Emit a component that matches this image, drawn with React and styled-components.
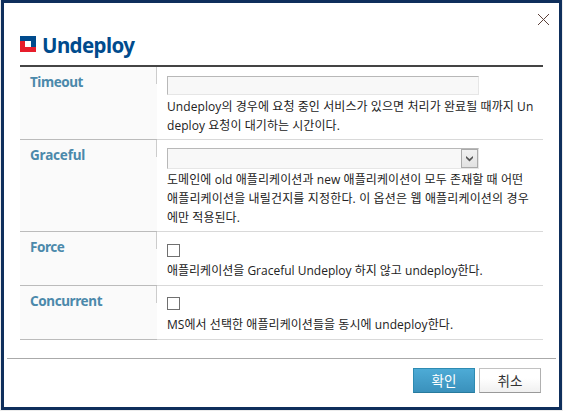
import React from "react";
import styled, { createGlobalStyle } from "styled-components";

const Global = createGlobalStyle`
  * { box-sizing: border-box; }
  body { margin: 0; background: #ececec; overflow: hidden; }
  body, button, input { font-family: "Open Sans", "Noto Sans CJK KR", sans-serif; }
`;

const Dialog = styled.section`
  width: 561px;
  height: 410px;
  margin-left: 1px;
  border: 3px solid #0f2f5c;
  background: #fff;
  display: flex;
  flex-direction: column;
`;

const Header = styled.header`
  height: 62px;
  padding-left: 16px;
  display: flex;
  align-items: flex-start;
`;

const Logo = styled.svg`
  width: 16px;
  height: 16px;
  margin-top: 33px;
  flex: none;
`;

const Title = styled.h1`
  margin: 27px 0 0 6px;
  font: 700 20.5px/30px "Noto Sans", sans-serif;
  letter-spacing: -0.6px;
  color: #004b8d;
`;

const CloseButton = styled.button`
  width: 13px;
  height: 13px;
  margin: 10px 9px 0 auto;
  padding: 0;
  border: 0;
  background: none;
  display: flex;
  svg { display: block; }
`;

const Table = styled.div`
  width: 523px;
  margin-left: 16px;
  border-top: 2px solid #444;
`;

const Row = styled.div`
  display: grid;
  grid-template-columns: 137px 386px;
  height: ${(p) => p.$height}px;
`;

const Label = styled.div`
  padding: 6px 0 0 10px;
  border-bottom: 1px solid #bbb;
  background: linear-gradient(#ccc, #ccc) right top / 1px 17px no-repeat #fafafa;
  color: #4b89ab;
  font: 700 13.5px/18px "Noto Sans", sans-serif;
  letter-spacing: ${(p) => p.$spacing}px;
`;

const Field = styled.div`
  padding: ${(p) => p.$top}px 0 0 10px;
  border-bottom: 1px solid #d9d9d9;
`;

const TextInput = styled.input`
  display: block;
  width: 312px;
  height: 19px;
  padding: 0 4px;
  border: 1px solid #e6e6e6;
  border-top-color: #b8b8b8;
  border-left-color: #b8b8b8;
  background: #f8f8f8;
`;

const Select = styled.div`
  display: flex;
  justify-content: flex-end;
  width: 312px;
  height: 21px;
  border: 1px solid #e6e6e6;
  border-top-color: #b8b8b8;
  border-left-color: #b8b8b8;
  background: #f8f8f8;
`;

const SelectArrow = styled.span`
  width: 17px;
  height: 19px;
  border: 1px solid #aaa;
  background: linear-gradient(#f1f1f1, #e2e2e2);
  display: flex;
  align-items: center;
  justify-content: center;
`;

const Checkbox = styled.input`
  appearance: none;
  display: block;
  width: 13px;
  height: 13px;
  margin: 0;
  border: 1px solid #707070;
  background: #fff;
`;

const Help = styled.p`
  margin: ${(p) => p.$gap}px 0 0;
  color: #222;
  font-size: 12px;
  line-height: 19px;
`;

const Line = styled.span`
  display: block;
  width: max-content;
  height: 19px;
  white-space: nowrap;
  letter-spacing: ${(p) => p.$spacing}px;
`;

const Footer = styled.footer`
  margin: 18px 3px 0;
  padding: 9px 15px 0 0;
  border-top: 1px solid #aaa;
  display: flex;
  justify-content: flex-end;
  gap: 4px;
`;

const Button = styled.button`
  width: 62px;
  height: 25px;
  padding: 0;
  font-size: 13.5px;
  line-height: 22px;
  color: ${(p) => (p.$primary ? "#fff" : "#333")};
  border: 1px solid;
  border-color: ${(p) => (p.$primary ? "#2d8bb2 #2d8bb2 #287a9d" : "#c2c2c2 #b0b0b0 #999 #c2c2c2")};
  background: ${(p) => (p.$primary ? "linear-gradient(#4dabd6, #3a91bc)" : "linear-gradient(#fff, #fff 40%, #f0f0f0)")};
`;

const rows = [
  {
    label: "Timeout", spacing: -0.45, height: 73, top: 9, gap: 2, kind: "text",
    lines: [
      ["Undeploy의 경우에 요청 중인 서비스가 있으면 처리가 완료될 때까지 Un", 0.08],
      ["deploy 요청이 대기하는 시간이다.", 0.06],
    ],
  },
  {
    label: "Graceful", spacing: -0.2, height: 92, top: 8, gap: 1, kind: "select",
    lines: [
      ["도메인에 old 애플리케이션과 new 애플리케이션이 모두 존재할 때 어떤", 0.08],
      ["애플리케이션을 내릴건지를 지정한다. 이 옵션은 웹 애플리케이션의 경우", 0.15],
      ["에만 적용된다.", 0.05],
    ],
  },
  {
    label: "Force", spacing: -0.45, height: 54, top: 12, gap: 4, kind: "check",
    lines: [["애플리케이션을 Graceful Undeploy 하지 않고 undeploy한다.", 0]],
  },
  {
    label: "Concurrent", spacing: -0.4, height: 54, top: 11, gap: 5, kind: "check",
    lines: [["MS에서 선택한 애플리케이션들을 동시에 undeploy한다.", 0.06]],
  },
];

function Control({ kind, label }) {
  if (kind === "text") return <TextInput aria-label={label} />;
  if (kind === "check") return <Checkbox type="checkbox" aria-label={label} />;
  return (
    <Select role="combobox" aria-label={label}>
      <SelectArrow>
        <svg width="9" height="7" viewBox="0 0 9 7">
          <path d="M1 1v2l3.5 3.5L8 3V1L4.5 4z" fill="#555" />
        </svg>
      </SelectArrow>
    </Select>
  );
}

export default function App() {
  return (
    <>
      <Global />
      <Dialog>
        <Header>
          <Logo viewBox="0 0 16 16" shapeRendering="crispEdges">
            <path d="M0 0h16v11h-5V5H0z" fill="#004b8d" />
            <path d="M0 5h5v6h11v5H0z" fill="#e71d2b" />
            <path d="M5 5h6v6H5z" fill="#fff" />
          </Logo>
          <Title>Undeploy</Title>
          <CloseButton aria-label="Close">
            <svg width="13" height="13" viewBox="0 0 13 13" shapeRendering="crispEdges">
              <path d="M1 1l11 11M12 1L1 12" stroke="#5b4039" strokeWidth="1" />
            </svg>
          </CloseButton>
        </Header>
        <Table>
          {rows.map((r) => (
            <Row key={r.label} $height={r.height}>
              <Label $spacing={r.spacing}>{r.label}</Label>
              <Field $top={r.top}>
                <Control kind={r.kind} label={r.label} />
                <Help $gap={r.gap}>
                  {r.lines.map(([text, spacing]) => (
                    <Line key={text} $spacing={spacing}>{text}</Line>
                  ))}
                </Help>
              </Field>
            </Row>
          ))}
        </Table>
        <Footer>
          <Button $primary>확인</Button>
          <Button>취소</Button>
        </Footer>
      </Dialog>
    </>
  );
}
